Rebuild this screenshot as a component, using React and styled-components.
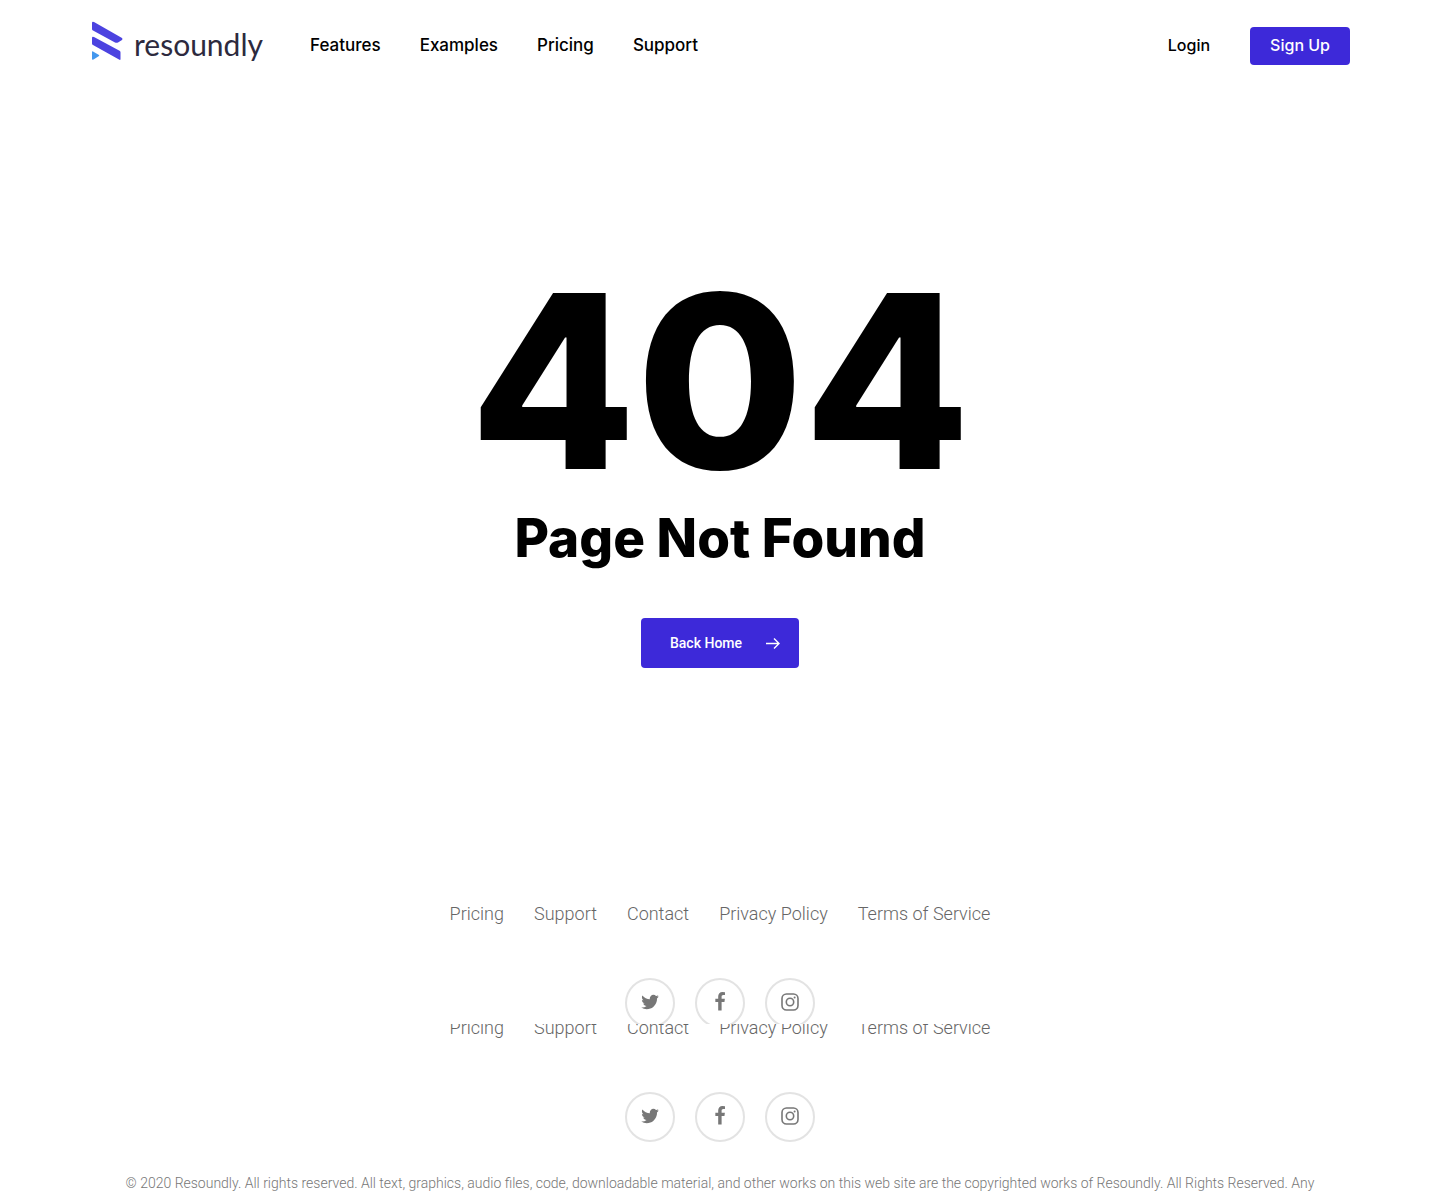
import React from "react";
import styled, { createGlobalStyle } from "styled-components";

const headerLinks = ["Features", "Examples", "Pricing", "Support"];
const footerLinks = ["Pricing", "Support", "Contact", "Privacy Policy", "Terms of Service"];

const Logo = () => (
  <LogoLink href="#home">
    <svg width="32" height="40" viewBox="0 0 32 40" aria-hidden="true">
      <path d="M0 2Q0 0 2 1L30 17Q31 18 30 19L26 21.500Q24.500 22 23 21.500L1 9.500Q0 9 0 8Z" fill="#4c43e0" />
      <path d="M0 17Q0 15 2 16L28 30Q28.500 30.500 28.500 31.500V38Q28.500 39.500 27 38.500L1 24Q0 23.500 0 22.500Z" fill="#4c43e0" />
      <path d="M0 31Q0 30 1 30.500L7 34Q7.500 34.500 7 35L1.500 38.500Q0 39 0 38Z" fill="#4397ee" />
    </svg>
    <LogoText>resoundly</LogoText>
  </LogoLink>
);

const Footer = ({ children }) => (
  <FooterBox>
    <FooterNav>
      {footerLinks.map((name) => (
        <FooterLink key={name} href="#footer">{name}</FooterLink>
      ))}
    </FooterNav>
    <Socials>
      <SocialLink href="#twitter" aria-label="Twitter">
        <svg width="20" height="20" viewBox="0 0 1792 1792">
          <path d="M1684 408q-67 98-162 167 1 14 1 42 0 130-38 259.500t-115.500 248.500-184.500 210.500-258 146-323 54.500q-271 0-496-145 35 4 78 4 225 0 401-138-105-2-188-64.500t-114-159.500q33 5 61 5 43 0 85-11-112-23-185.500-111.500t-73.500-205.500v-4q68 38 146 41-66-44-105-115t-39-154q0-88 44-163 121 149 294.500 238.500t371.500 99.500q-8-38-8-74 0-134 94.500-228.500t228.500-94.500q140 0 236 102 109-21 205-78-37 115-142 178 93-10 186-50z" />
        </svg>
      </SocialLink>
      <SocialLink href="#facebook" aria-label="Facebook">
        <svg width="20" height="20" viewBox="0 0 1792 1792">
          <path d="M1343 12v264h-157q-86 0-116 36t-30 108v189h293l-39 296h-254v759h-306v-759h-255v-296h255v-218q0-186 104-288.500t277-102.500q147 0 228 12z" />
        </svg>
      </SocialLink>
      <SocialLink href="#instagram" aria-label="Instagram">
        <svg width="20" height="20" viewBox="0 0 20 20">
          <rect x="2" y="2" width="16" height="16" rx="4.500" fill="none" stroke="#777" strokeWidth="1.6" />
          <circle cx="10" cy="10" r="3.700" fill="none" stroke="#777" strokeWidth="1.6" />
          <circle cx="14.600" cy="5.400" r="1" />
        </svg>
      </SocialLink>
    </Socials>
    {children}
  </FooterBox>
);

const App = () => {
  return (
    <>
      <GlobalStyle />
      <Header>
        <Logo />
        <Nav>
          {headerLinks.map((name) => (
            <NavLink key={name} href="#nav" $size={17}>{name}</NavLink>
          ))}
        </Nav>
        <Account>
          <NavLink href="#login" $size={16}>Login</NavLink>
          <SignUp type="button">Sign Up</SignUp>
        </Account>
      </Header>
      <Main>
        <Code>404</Code>
        <Title>Page Not Found</Title>
        <HomeButton type="button">
          Back Home
          <svg width="14" height="12" viewBox="0 0 14 12" fill="none" stroke="#fff" strokeWidth="1.4" aria-hidden="true">
            <path d="M0 6.500H13M8 1.500L13 6.500L8 11.500" />
          </svg>
        </HomeButton>
      </Main>
      <FooterPeek>
        <Footer />
      </FooterPeek>
      <FooterReveal>
        <Footer>
          <Copyright>
            © 2020 Resoundly. All rights reserved. All text, graphics, audio files, code, downloadable material, and other works on this web site are the copyrighted works of Resoundly. All Rights Reserved. Any
          </Copyright>
        </Footer>
      </FooterReveal>
    </>
  );
};
export default App;

const GlobalStyle = createGlobalStyle`
  * { box-sizing: border-box; }
  body {
    margin: 0;
    background: #fff;
    color: #000;
    font-family: Roboto, sans-serif;
  }
  a { text-decoration: none; color: inherit; }
  button { border: 0; cursor: pointer; }
`;
const Header = styled.header`
  display: flex;
  align-items: center;
  height: 92px;
  padding: 0 90px 0 92px;
`;
const LogoLink = styled.a`
  display: flex;
  align-items: center;
  height: 40px;
  margin-bottom: 10px;
  gap: 10px;
  width: 218px;
`;
const LogoText = styled.span`
  font-family: Lato, sans-serif;
  font-size: 30px;
  line-height: 36px;
  padding-top: 6px;
  color: #2d2a3e;
`;
const Nav = styled.nav`
  display: flex;
  gap: 39px;
`;
const NavLink = styled.a`
  font-family: Inter, sans-serif;
  font-size: ${({ $size }) => $size}px;
  font-weight: 500;
  line-height: 24px;
  padding-bottom: 2px;
`;
const Account = styled.div`
  display: flex;
  align-items: center;
  gap: 40px;
  margin-left: auto;
`;
const SignUp = styled.button`
  height: 38px;
  padding: 0 20px 2px;
  border-radius: 4px;
  background: #3d29d9;
  color: #fff;
  font-family: Inter, sans-serif;
  font-size: 16px;
  font-weight: 500;
`;
const Main = styled.main`
  display: flex;
  flex-direction: column;
  align-items: center;
  padding: 164px 20px 186px;
`;
const Code = styled.h1`
  margin: 0;
  font-family: Inter, sans-serif;
  font-size: 242px;
  font-weight: 800;
  line-height: 250px;
`;
const Title = styled.h2`
  margin: 0 0 48px;
  font-family: Inter, sans-serif;
  font-size: 53px;
  font-weight: 800;
  line-height: 64px;
`;
const HomeButton = styled.button`
  display: flex;
  align-items: center;
  gap: 24px;
  height: 50px;
  padding: 0 19px 0 29px;
  border-radius: 4px;
  background: #3d29d9;
  color: #fff;
  font-family: Roboto, sans-serif;
  font-size: 14px;
  font-weight: 500;
`;
const FooterPeek = styled.div`
  height: 170px;
  overflow: hidden;
`;
const FooterReveal = styled.div`
  overflow: hidden;
  & > footer { margin-top: -56px; }
`;
const FooterBox = styled.footer`
  display: flex;
  flex-direction: column;
  align-items: center;
  padding: 46px 90px 0;
`;
const FooterNav = styled.nav`
  display: flex;
  gap: 30px;
`;
const FooterLink = styled.a`
  color: #666;
  font-size: 18px;
  font-weight: 300;
  line-height: 28px;
`;
const Socials = styled.div`
  display: flex;
  gap: 20px;
  margin-top: 50px;
`;
const SocialLink = styled.a`
  display: flex;
  align-items: center;
  justify-content: center;
  width: 50px;
  height: 50px;
  padding-bottom: 2px;
  border: 2px solid #e3e3e3;
  border-radius: 50%;
  svg { fill: #777; }
`;
const Copyright = styled.p`
  margin: 29px 0 0;
  color: #777;
  font-size: 14px;
  font-weight: 300;
  line-height: 24px;
  text-align: center;
`;
